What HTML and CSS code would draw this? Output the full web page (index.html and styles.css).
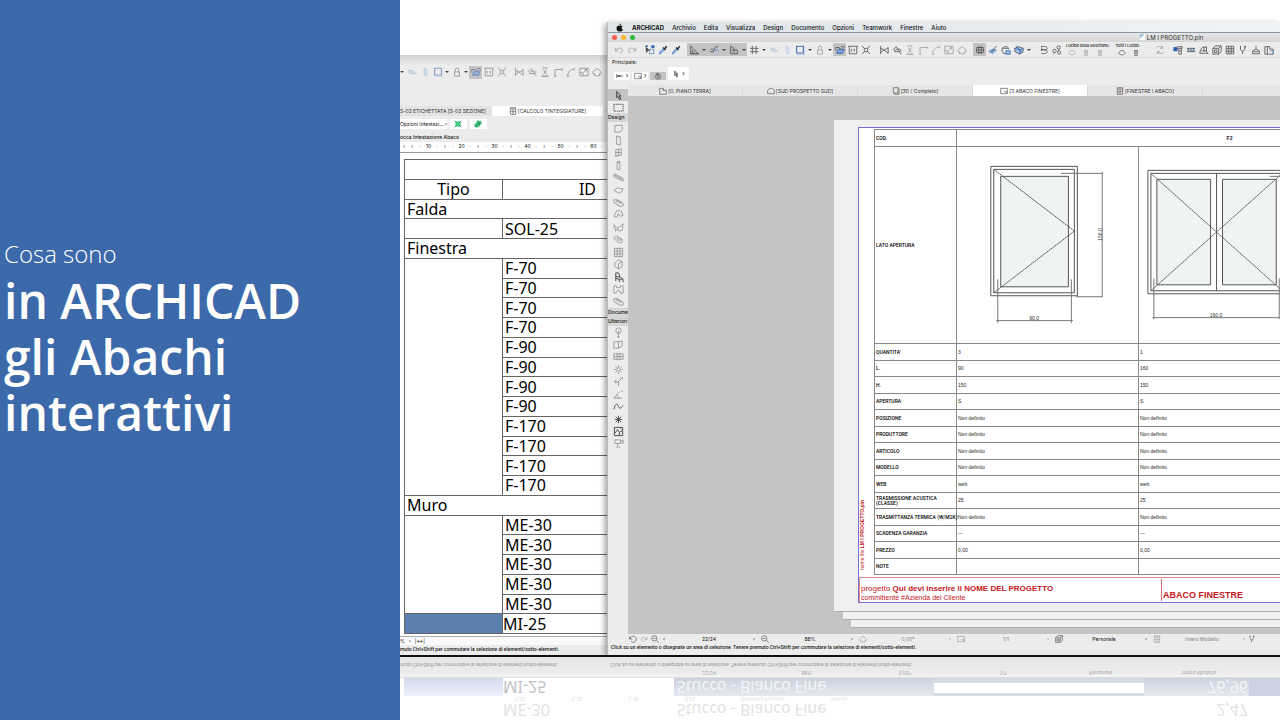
FILE: index.html
```html
<!DOCTYPE html>
<html lang="it">
<head>
    <meta charset="UTF-8">
    <meta name="viewport" content="width=device-width, initial-scale=1.0">
    <title>Cosa sono in ARCHICAD gli Abachi interattivi</title>
    <link rel="stylesheet" href="styles.css">
</head>
<body>
    <svg class="sprite" aria-hidden="true">
        <symbol id="i-undo" viewBox="0 0 12 12"><path d="M1.5 3.5v3.5h3.5M2 6.5C4 2.500 10.500 3 10 7c-.2 1.800-1.500 2.500-3 2.500"/></symbol>
        <symbol id="i-redo" viewBox="0 0 12 12"><path d="M10.500 3.500v3.500H7M10 6.500C8 2.500 1.500 3 2 7c.2 1.800 1.500 2.500 3 2.500"/></symbol>
        <symbol id="i-pick" viewBox="0 0 12 12"><path d="M5.500 5h5v5.500h-5z" stroke="#2e5fa8" stroke-dasharray="2 1"/><path d="M1 3l4 3-2 .5L2 9z" fill="#223"/><path d="M1 1h2v1H1zM8 1h3v2H8z" fill="#2e5fa8" stroke="#2e5fa8"/></symbol>
        <symbol id="i-pipette" viewBox="0 0 12 12"><path d="M1.500 11l1-3 4-4 1.500 1.500-4 4z" fill="#8db5e8" stroke="#5a83c8"/><path d="M6 3l3 3M8 4.500L10.500 1.500" stroke="#234" stroke-width="1.800"/></symbol>
        <symbol id="i-setsq" viewBox="0 0 12 12"><path d="M2 1v9.500h9zM4 6v2.500h2.500M1 10.500h11"/></symbol>
        <symbol id="i-snap" viewBox="0 0 12 12"><path d="M1 8h5M2 5h3M11 2H8L5 8"/><path d="M5 6h6" stroke="#5a83c8"/></symbol>
        <symbol id="i-plane" viewBox="0 0 12 12"><path d="M2 1v9.500h9M2 1l4 3v6M6 6h4v4M3 6h3"/></symbol>
        <symbol id="i-grid" viewBox="0 0 12 12"><path d="M4 1v10M8.500 1v10M1 4h10.500M1 8h10.500"/></symbol>
        <symbol id="i-slab" viewBox="0 0 12 12"><path d="M1 4h5l5 4H6zM4 4l5 4M2 6l4 3" stroke="#8fa9cd"/></symbol>
        <symbol id="i-blade" viewBox="0 0 12 12"><path d="M5 1v8l3 2V3z" fill="#c9dcf4" stroke="#8fb0dc"/></symbol>
        <symbol id="i-frame" viewBox="0 0 12 12"><path d="M2 1.500h8v8H2z" stroke="#456cab" stroke-width="1.300"/><path d="M2 11.500h10V3" stroke="#a6bfe4"/></symbol>
        <symbol id="i-lock" viewBox="0 0 12 12"><path d="M3 6h6v5H3zM4 6V2.500C4 .7 8 .7 8 2.500V6"/></symbol>
        <symbol id="i-trace" viewBox="0 0 12 12"><path d="M2 10l2-5h7l-2 5z" fill="#7ea5dc" stroke="#2e5fa8"/><path d="M1 3h4l2 3M7 2h4v2M1 3v4"/></symbol>
        <symbol id="i-board" viewBox="0 0 12 12"><path d="M0 1.500h12M1.500 2v8.500h9V2M4 5v3M4 5h1M7.500 5v3M7 5h1"/></symbol>
        <symbol id="i-shrink" viewBox="0 0 12 12"><path d="M4 4h4v4H4zM1 1l3 3M11 1L8 4M1 11l3-3M11 11L8 8"/></symbol>
        <symbol id="i-split" viewBox="0 0 12 12"><path d="M2 1v10M2 9l4-3 5 4V3L7 6 2 4"/></symbol>
        <symbol id="i-spline" viewBox="0 0 12 12"><path d="M1 6l4-4 6 9M3 8h6c3-1 1-4-1-3S4 4 3 8z"/></symbol>
        <symbol id="i-elev" viewBox="0 0 12 12"><path d="M3 1h6M3 11h6M4 3l2 3 2-3M4 9l2-3 2 3M1.500 11h9"/></symbol>
        <symbol id="i-corner" viewBox="0 0 12 12"><path d="M2.500 11V3H11M1 11h3M11 1.500v3"/></symbol>
        <symbol id="i-arc" viewBox="0 0 12 12"><path d="M2 11C2 6 5 3 10 2.500M1 11h3M10 1v3"/></symbol>
        <symbol id="i-resize" viewBox="0 0 12 12"><path d="M1 1.500h10v9H1zM1 7h4v3.500M6 6l3-3M7 3h2v2"/></symbol>
        <symbol id="i-home" viewBox="0 0 12 12"><path d="M1 7C1 4.500 4 4 6 2c2 2 5 2.500 5 5 0 2-1.500 1-2 1v2.500H3V8C2.500 8 1 9 1 7z"/></symbol>
        <symbol id="i-group" viewBox="0 0 12 12"><path d="M2 3h8v6H2zM4.500 1v10M7.500 1v10M1 6h10"/></symbol>
        <symbol id="i-edit" viewBox="0 0 12 12"><path d="M1 8l4-3 5 1-4 4z" fill="#8db5e8" stroke="#5a83c8"/><path d="M4 9l6-8"/></symbol>
        <symbol id="i-globe" viewBox="0 0 12 12"><path d="M9.500 5A4.300 4.300 0 1 0 6 10.500M2 4h7"/><path d="M6 7h5v4H6z" fill="#a9c6ee" stroke="#2e5fa8"/></symbol>
        <symbol id="i-cube" viewBox="0 0 12 12"><path d="M1 4l4-2 6 2v4l-4 3-6-3z" fill="#a9c6ee"/><path d="M1 4l6 2 4-2M7 6v5M3 1l6 8" stroke="#2e5fa8"/></symbol>
        <symbol id="i-layers" viewBox="0 0 12 12"><path d="M3 2c3-1 7 0 7 2S7 6 3 5M3 1v2M2 6c5 0 8 0 8 2s-4 3-7 2M3 4v3"/></symbol>
        <symbol id="i-linked" viewBox="0 0 12 12"><circle cx="8" cy="3" r="2"/><circle cx="3" cy="7" r="2"/><circle cx="8.500" cy="9" r="2"/><path d="M2 11l1-2M8 5v2"/></symbol>
        <symbol id="i-eye" viewBox="0 0 12 12"><path d="M1 6c2-5 8-5 10 0-2 4-8 4-10 0z"/></symbol>
        <symbol id="i-pad" viewBox="0 0 12 12"><path d="M4 4h4v6H4zM4 4V2h4v2M4 7h4"/></symbol>
        <symbol id="i-swap" viewBox="0 0 12 12"><path d="M2 4c0-3 6-3 7 0M9 1v3H6M10 8c0 3-6 3-7 0M3 11V8h3"/></symbol>
        <symbol id="i-export" viewBox="0 0 12 12"><path d="M1 3h4v4H1z" fill="#2e5fa8" stroke="#2e5fa8"/><path d="M5 2h6v2H5M7 4v7h3V4M7 7h3"/></symbol>
        <symbol id="i-beam" viewBox="0 0 12 12"><path d="M1 4h10M1 8h10M3 4v4M6 4v4M9 4v4"/><path d="M1 6h10" stroke="#5b8fd8"/></symbol>
        <symbol id="i-solid" viewBox="0 0 12 12"><path d="M1 10c0-4 2-7 5-8v6M6 3l3-1v6l2 2H1M3 7h6"/></symbol>
        <symbol id="i-box" viewBox="0 0 12 12"><path d="M1 4h7v7H1zM1 4l3-3h7v7l-3 3M8 4l3-3M3 6h3v3H3z"/></symbol>
        <symbol id="i-sheet" viewBox="0 0 12 12"><path d="M1.500 1.500h9v9h-9zM1.500 4.500h9M1.500 7.500h9M4.500 1.500v9M7.500 1.500v9"/></symbol>
        <symbol id="i-fork" viewBox="0 0 12 12"><path d="M3 1v4c0 3 5 3 5 0V1M5.500 7.500V11M9 1v2"/></symbol>
        <symbol id="i-stamp" viewBox="0 0 12 12"><path d="M6 1v4M2 10.500V7l4-2 4 2v3.500zM3 8h6"/></symbol>
        <symbol id="i-plan" viewBox="0 0 12 12"><path d="M1 2h6v3h4v6H1zM4 2v9"/><path d="M7 7h4v4" stroke="#5b8fd8"/></symbol>
        <symbol id="i-rotate" viewBox="0 0 12 12"><circle cx="6" cy="7" r="4"/><circle cx="6" cy="7" r="1.500"/><path d="M3 1l3 3M6 1v3H3"/></symbol>
        <symbol id="i-line" viewBox="0 0 12 12"><path d="M1 3v6M1 6h10" /><path d="M2 6h5" stroke-width="2.500"/></symbol>
        <symbol id="i-arrow" viewBox="0 0 12 12"><path d="M4 1.500v7l1.500-1.500L7 10.500l1.500-.6L7 6.500h2z" fill="#aaa" stroke="#444"/></symbol>
        <symbol id="i-marquee" viewBox="0 0 12 12"><path d="M1 2.500h10v7.500H1z" stroke="#444" stroke-dasharray="1.500 .8"/></symbol>
        <symbol id="i-wall" viewBox="0 0 12 12"><path d="M2 3l8-1v6l-3 2H2z"/></symbol>
        <symbol id="i-door" viewBox="0 0 12 12"><path d="M4 1l4 1v9l-4-1z"/></symbol>
        <symbol id="i-window" viewBox="0 0 12 12"><path d="M3 3l6-1v7l-6 1zM6 2.500v7M3 6h6M2 10h2"/></symbol>
        <symbol id="i-column" viewBox="0 0 12 12"><path d="M4.500 1.500h3v9h-3zM4.500 3h3"/></symbol>
        <symbol id="i-beam3" viewBox="0 0 12 12"><path d="M1 3l1-1 9 5v3L1 5zM1 3l9 5"/></symbol>
        <symbol id="i-slab3" viewBox="0 0 12 12"><path d="M1 6l4-3 3 1h3l-1 3-3 2-4-2z"/></symbol>
        <symbol id="i-stair" viewBox="0 0 12 12"><path d="M1 3h4l6 4v3H7L1 6zM3 3l6 4M3 6l4-2M6 8l3-3"/></symbol>
        <symbol id="i-roof" viewBox="0 0 12 12"><path d="M1 8l3-6h5l2 5-3 1-2-3-2 4z"/></symbol>
        <symbol id="i-shell" viewBox="0 0 12 12"><path d="M1 3l4 4 6-5-1 7-3 1-2-3-2 3z"/></symbol>
        <symbol id="i-skylight" viewBox="0 0 12 12"><path d="M1 4l3-2 6 4v3l-3 1-5-4zM4 5l3-1 2 2-3 1z"/></symbol>
        <symbol id="i-morph" viewBox="0 0 12 12"><path d="M2 8C1 4 4 2 6 1l4 2v5l-4 3zM6 5v6M6 5l4-2"/></symbol>
        <symbol id="i-chair" viewBox="0 0 12 12"><path d="M3 1v9M3 1h3l1 2v3M3 5l5 .5L11 8v3M3 7l4 1v3M7 8l4-.5"/></symbol>
        <symbol id="i-mesh" viewBox="0 0 12 12"><path d="M1 2h3v2h4V2h3v8H8V8L5 7l-2 3H1z"/></symbol>
        <symbol id="i-lamp" viewBox="0 0 12 12"><circle cx="6" cy="4" r="3"/><path d="M6 4v7M4.500 11h3"/></symbol>
        <symbol id="i-zone" viewBox="0 0 12 12"><path d="M1 3h5v7H1zM6 3l4-1v6L6 10"/></symbol>
        <symbol id="i-net" viewBox="0 0 12 12"><path d="M1 3h10v6H1zM4.500 2v8M7.500 2v8M1 6h10"/></symbol>
        <symbol id="i-sun" viewBox="0 0 12 12"><circle cx="6" cy="6" r="2"/><path d="M6 1v2M6 9v2M1 6h2M9 6h2M2.500 2.500L4 4M8 8l1.500 1.500M9.500 2.500L8 4M2.500 9.500L4 8"/></symbol>
        <symbol id="i-dim" viewBox="0 0 12 12"><path d="M1 6l4 1 4-4M3 4v4M6 6v5M8 2h1M10 1v3"/></symbol>
        <symbol id="i-angle" viewBox="0 0 12 12"><path d="M1 10h9M1 10l6-7M6 10c0-2-1-3-2-3.500M9 2l2 1"/></symbol>
        <symbol id="i-curve" viewBox="0 0 12 12"><path d="M1 9C3 1 5 3 6 6s3 2 5-1"/></symbol>
        <symbol id="i-star" viewBox="0 0 12 12"><path d="M6 2v8M2 6h8M3 3l6 6M9 3l-6 6"/></symbol>
        <symbol id="i-picture" viewBox="0 0 12 12"><path d="M1.500 1.500h9v9h-9zM2 8l3-4 2 3 3-2M7 7v3M8 3h1"/></symbol>
        <symbol id="i-camera" viewBox="0 0 12 12"><path d="M2 2h6v4H2zM8 4l3-2v4zM5 6v3M3 11l2-2 3 2"/></symbol>
        <symbol id="i-folder" viewBox="0 0 12 12"><path d="M1 2h5v3h5v6H1zM6 2l2 3"/></symbol>
        <symbol id="i-front" viewBox="0 0 12 12"><path d="M1 5l3-3h4l3 3v5H1z"/></symbol>
        <symbol id="i-page3d" viewBox="0 0 12 12"><path d="M2 1h7v8H2zM9 1l1.500 1.500V11H4L2 9"/></symbol>
        <symbol id="i-list" viewBox="0 0 12 12"><path d="M2 1h8v10H2zM2 3h8M2 7h8M6 3v8"/></symbol>
        <symbol id="i-layout" viewBox="0 0 12 12"><path d="M1 2h10v8H1zM6 7h4v3"/></symbol>
        <symbol id="i-zoom" viewBox="0 0 12 12"><circle cx="5" cy="5" r="4"/><path d="M8 8l3.500 3.500M3 5h4"/></symbol>
        <symbol id="i-back" viewBox="0 0 12 12"><path d="M1 2v4h4M1 6c2-6 10-5 10 0s-6 6-8 3"/></symbol>
        <symbol id="i-green" viewBox="0 0 12 12"><path d="M2 2h8v8H2z" fill="#48cf88" stroke="none"/><path d="M1 1l3 3M11 1L8 4M1 11l3-3M11 11L8 8" stroke="#167a43"/></symbol>
        <symbol id="i-green2" viewBox="0 0 12 12"><path d="M4 1h7v6H8v4H1V5h3z" fill="#48cf88" stroke="none"/><path d="M4 4l4 4M1 8h3v3M6 1v3M11 4H8v4" stroke="#116236"/></symbol>
        <symbol id="i-apple" viewBox="0 0 12 12"><path d="M6 4c2-1 3-.5 4 .5-2 1-1.500 3.500.5 4C9.500 11 8.500 12 6.500 11 4 12 2 10 2 7c0-3 2-4 4-3zM6 3c0-1.500 1-2.500 2-2.500C8 2 7.500 3 6 3z" fill="#111" stroke="none"/></symbol>
    </svg>

    <div class="page">
        <header class="cover">
            <p class="kicker">Cosa sono</p>
            <h1>in ARCHICAD<br>gli Abachi<br>interattivi</h1>
        </header>

        <main class="stage">
            <div class="windows">
                <section class="window window-back">
                    <div class="tools">
                        <button class="caret" aria-label="Altro"></button>
                        <button aria-label="Solaio"><svg><use href="#i-slab"/></svg></button>
                        <button aria-label="Lama"><svg><use href="#i-blade"/></svg></button>
                        <button aria-label="Cornice"><svg><use href="#i-frame"/></svg></button>
                        <button class="caret" aria-label="Altro"></button>
                        <button aria-label="Blocca"><svg><use href="#i-lock"/></svg></button>
                        <button class="caret" aria-label="Altro"></button>
                        <button class="on" aria-label="Traccia"><svg><use href="#i-trace"/></svg></button>
                        <button aria-label="Tavola"><svg><use href="#i-board"/></svg></button>
                        <button class="end" aria-label="Riduci"><svg><use href="#i-shrink"/></svg></button>
                        <button aria-label="Dividi"><svg><use href="#i-split"/></svg></button>
                        <button aria-label="Spline"><svg><use href="#i-spline"/></svg></button>
                        <button aria-label="Quota"><svg><use href="#i-elev"/></svg></button>
                        <button aria-label="Angolo"><svg><use href="#i-corner"/></svg></button>
                        <button aria-label="Raccordo"><svg><use href="#i-arc"/></svg></button>
                        <button aria-label="Ridimensiona"><svg><use href="#i-resize"/></svg></button>
                        <button aria-label="Casa"><svg><use href="#i-home"/></svg></button>
                    </div>
                    <div class="tabs">
                        <button class="tab">S-02 ETICHETTATA [S-02 SEZIONE]</button>
                        <button class="tab active"><svg><use href="#i-list"/></svg>[CALCOLO TINTEGGIATURE]</button>
                    </div>
                    <div class="options">
                        <button class="option">Opzioni Intestazi... ›</button>
                        <button class="option icon" aria-label="Adatta"><svg><use href="#i-green"/></svg></button>
                        <button class="option icon" aria-label="Unisci"><svg><use href="#i-green2"/></svg></button>
                    </div>
                    <p class="lock-note">occa Intestazione Abaco</p>
                    <div class="ruler">
                        <span>ı</span><span>ı</span><span>·</span><b>10</b><span>·</span><span>ı</span><span>·</span><b>20</b><span>·</span><span>ı</span><span>·</span><b>30</b><span>·</span><span>ı</span><span>·</span><b>40</b><span>·</span><span>ı</span><span>·</span><b>50</b><span>·</span><span>ı</span><span>·</span><b>60</b><span>·</span>
                    </div>
                    <div class="schedule">
                        <table>
                            <colgroup><col class="c-type"><col></colgroup>
                            <tr><td colspan="2"></td></tr>
                            <tr><th>Tipo</th><th class="id">ID</th></tr>
                            <tr><td colspan="2">Falda</td></tr>
                            <tr><td></td><td>SOL-25</td></tr>
                            <tr><td colspan="2">Finestra</td></tr>
                            <tr><td rowspan="12"></td><td>F-70</td></tr>
                            <tr><td>F-70</td></tr>
                            <tr><td>F-70</td></tr>
                            <tr><td>F-70</td></tr>
                            <tr><td>F-90</td></tr>
                            <tr><td>F-90</td></tr>
                            <tr><td>F-90</td></tr>
                            <tr><td>F-90</td></tr>
                            <tr><td>F-170</td></tr>
                            <tr><td>F-170</td></tr>
                            <tr><td>F-170</td></tr>
                            <tr><td>F-170</td></tr>
                            <tr><td colspan="2">Muro</td></tr>
                            <tr><td rowspan="5"></td><td>ME-30</td></tr>
                            <tr><td>ME-30</td></tr>
                            <tr><td>ME-30</td></tr>
                            <tr><td>ME-30</td></tr>
                            <tr><td>ME-30</td></tr>
                            <tr><td class="selected"></td><td class="editing">MI-25</td></tr>
                        </table>
                    </div>
                    <div class="status"><span>%</span><span>›</span><span>|↔|</span></div>
                    <p class="message">muto Ctrl+Shift per commutare la selezione di elementi/sotto-elementi.</p>
                </section>

                <section class="window window-front">
                    <nav class="menubar">
                        <svg><use href="#i-apple"/></svg>
                        <a href="#"><strong>ARCHICAD</strong></a>
                        <a href="#">Archivio</a>
                        <a href="#">Edita</a>
                        <a href="#">Visualizza</a>
                        <a href="#">Design</a>
                        <a href="#">Documento</a>
                        <a href="#">Opzioni</a>
                        <a href="#">Teamwork</a>
                        <a href="#">Finestre</a>
                        <a href="#">Aiuto</a>
                    </nav>
                    <div class="titlebar">
                        <i class="light red"></i><i class="light yellow"></i><i class="light green"></i>
                        <span class="title"><i class="file"></i>LM I PROGETTO.pin</span>
                    </div>
                    <div class="tools">
                        <button aria-label="Annulla"><svg class="faint"><use href="#i-undo"/></svg></button>
                        <button class="end" aria-label="Ripristina"><svg class="faint"><use href="#i-redo"/></svg></button>
                        <button aria-label="Trova"><svg><use href="#i-pick"/></svg></button>
                        <button aria-label="Preleva"><svg><use href="#i-pipette"/></svg></button>
                        <button class="end" aria-label="Inietta"><svg><use href="#i-pipette"/></svg></button>
                        <button class="on" aria-label="Guide"><svg><use href="#i-setsq"/></svg></button>
                        <button class="on caret" aria-label="Altro"></button>
                        <button class="on" aria-label="Snap"><svg><use href="#i-snap"/></svg></button>
                        <button class="on caret" aria-label="Altro"></button>
                        <button class="on" aria-label="Piano"><svg><use href="#i-plane"/></svg></button>
                        <button class="on caret" aria-label="Altro"></button>
                        <button aria-label="Griglia"><svg><use href="#i-grid"/></svg></button>
                        <button class="caret" aria-label="Altro"></button>
                        <button aria-label="Solaio"><svg class="faint"><use href="#i-slab"/></svg></button>
                        <button aria-label="Lama"><svg class="faint"><use href="#i-blade"/></svg></button>
                        <button aria-label="Cornice"><svg><use href="#i-frame"/></svg></button>
                        <button class="caret" aria-label="Altro"></button>
                        <button aria-label="Blocca"><svg class="faint"><use href="#i-lock"/></svg></button>
                        <button class="caret" aria-label="Altro"></button>
                        <button class="on" aria-label="Traccia"><svg><use href="#i-trace"/></svg></button>
                        <button aria-label="Tavola"><svg><use href="#i-board"/></svg></button>
                        <button class="end" aria-label="Riduci"><svg><use href="#i-shrink"/></svg></button>
                        <button aria-label="Dividi"><svg><use href="#i-split"/></svg></button>
                        <button aria-label="Spline"><svg><use href="#i-spline"/></svg></button>
                        <button aria-label="Quota"><svg class="faint"><use href="#i-elev"/></svg></button>
                        <button aria-label="Angolo"><svg class="faint"><use href="#i-corner"/></svg></button>
                        <button aria-label="Raccordo"><svg class="faint"><use href="#i-arc"/></svg></button>
                        <button aria-label="Ridimensiona"><svg class="faint"><use href="#i-resize"/></svg></button>
                        <button class="end" aria-label="Casa"><svg class="faint"><use href="#i-home"/></svg></button>
                        <button class="on" aria-label="Raggruppa"><svg><use href="#i-group"/></svg></button>
                        <button aria-label="Modifica"><svg><use href="#i-edit"/></svg></button>
                        <button aria-label="Rete"><svg><use href="#i-globe"/></svg></button>
                        <button aria-label="Cubo"><svg><use href="#i-cube"/></svg></button>
                        <button class="caret end" aria-label="Altro"></button>
                        <button aria-label="Lucidi"><svg><use href="#i-layers"/></svg></button>
                        <button aria-label="Collega"><svg><use href="#i-linked"/></svg></button>
                        <div class="layer-set">
                            <span>Lucido della selezione:</span>
                            <div class="layer-icons faint"><svg><use href="#i-eye"/></svg><svg><use href="#i-pad"/></svg><svg><use href="#i-pad"/></svg></div>
                        </div>
                        <div class="layer-set">
                            <span>Tutti i Lucidi:</span>
                            <div class="layer-icons"><svg><use href="#i-eye"/></svg><svg><use href="#i-pad"/></svg></div>
                        </div>
                        <button class="far end" aria-label="Scambia"><svg class="faint"><use href="#i-swap"/></svg></button>
                        <button aria-label="Esporta"><svg><use href="#i-export"/></svg></button>
                        <button aria-label="Travi"><svg><use href="#i-beam"/></svg></button>
                        <button aria-label="Solidi"><svg><use href="#i-solid"/></svg></button>
                        <button aria-label="Volume"><svg><use href="#i-box"/></svg></button>
                        <button aria-label="Abaco"><svg><use href="#i-sheet"/></svg></button>
                        <button aria-label="Forcella"><svg><use href="#i-fork"/></svg></button>
                        <button aria-label="Timbro"><svg><use href="#i-stamp"/></svg></button>
                        <button aria-label="Pianta"><svg><use href="#i-plan"/></svg></button>
                    </div>
                    <div class="infobox">
                        <span>Principale:</span>
                        <div class="info-buttons">
                            <button aria-label="Linea"><svg><use href="#i-line"/></svg>›</button>
                            <button aria-label="Area"><svg><use href="#i-layout"/></svg>›</button>
                            <button class="on" aria-label="Ruota"><svg><use href="#i-rotate"/></svg></button>
                            <button class="tall" aria-label="Freccia"><svg><use href="#i-arrow"/></svg>›</button>
                        </div>
                    </div>

                    <div class="workspace">
                        <div class="toolbox">
                            <button class="on" aria-label="Freccia"><svg><use href="#i-arrow"/></svg></button>
                            <button aria-label="Area di selezione"><svg><use href="#i-marquee"/></svg></button>
                            <h2>Design</h2>
                            <div class="tool-group design">
                                <button aria-label="Muro"><svg><use href="#i-wall"/></svg></button>
                                <button aria-label="Porta"><svg><use href="#i-door"/></svg></button>
                                <button aria-label="Finestra"><svg><use href="#i-window"/></svg></button>
                                <button aria-label="Pilastro"><svg><use href="#i-column"/></svg></button>
                                <button aria-label="Trave"><svg><use href="#i-beam3"/></svg></button>
                                <button aria-label="Solaio"><svg><use href="#i-slab3"/></svg></button>
                                <button aria-label="Scala"><svg><use href="#i-stair"/></svg></button>
                                <button aria-label="Falda"><svg><use href="#i-roof"/></svg></button>
                                <button aria-label="Guscio"><svg><use href="#i-shell"/></svg></button>
                                <button aria-label="Lucernario"><svg><use href="#i-skylight"/></svg></button>
                                <button aria-label="Facciata"><svg><use href="#i-sheet"/></svg></button>
                                <button aria-label="Forma"><svg><use href="#i-morph"/></svg></button>
                                <button aria-label="Oggetto"><svg class="dark"><use href="#i-chair"/></svg></button>
                                <button aria-label="Zona"><svg><use href="#i-mesh"/></svg></button>
                                <button aria-label="Mesh"><svg><use href="#i-stair"/></svg></button>
                            </div>
                            <h2>Docume</h2>
                            <h2>Ulteriori</h2>
                            <div class="tool-group more">
                                <button aria-label="Lampada"><svg><use href="#i-lamp"/></svg></button>
                                <button aria-label="Angolo muro"><svg><use href="#i-zone"/></svg></button>
                                <button aria-label="Griglia"><svg><use href="#i-net"/></svg></button>
                                <button aria-label="Luce"><svg><use href="#i-sun"/></svg></button>
                                <button aria-label="Radiale"><svg><use href="#i-dim"/></svg></button>
                                <button aria-label="Angolare"><svg><use href="#i-angle"/></svg></button>
                                <button aria-label="Spline"><svg class="dark"><use href="#i-curve"/></svg></button>
                                <button aria-label="Punto"><svg class="dark"><use href="#i-star"/></svg></button>
                                <button aria-label="Figura"><svg class="dark"><use href="#i-picture"/></svg></button>
                                <button aria-label="Camera"><svg><use href="#i-camera"/></svg></button>
                            </div>
                        </div>

                        <div class="views">
                            <div class="tabs">
                                <button class="tab"><svg><use href="#i-folder"/></svg>[0. PIANO TERRA]</button>
                                <button class="tab"><svg><use href="#i-front"/></svg>[SUD PROSPETTO SUD]</button>
                                <button class="tab"><svg><use href="#i-page3d"/></svg>[3D / Completo]</button>
                                <button class="tab active"><svg><use href="#i-layout"/></svg>[3 ABACO FINESTRE]</button>
                                <button class="tab"><svg><use href="#i-list"/></svg>[FINESTRE I ABACO]</button>
                            </div>
                            <div class="canvas">
                                <div class="sheet">
                                    <div class="drawing">
                                        <div class="drawing-top">
                                            <p class="filename">nome file <b>LM I PROGETTO.pin</b></p>
                                            <table class="abaco">
                                                <colgroup><col class="c-name"><col class="c-val"><col></colgroup>
                                                <tr class="code"><th>COD.</th><td></td><td><b>F2</b></td></tr>
                                                <tr class="views-row">
                                                    <th>LATO APERTURA</th>
                                                    <td>
                                                        <svg class="elevation" viewBox="957 147 181 197">
                                                            <path class="glass" d="M1000.500 176.500h68v111h-68z"/>
                                                            <path d="M990.500 166.500h87v130h-87zM993.500 169.500h81v124h-81z"/>
                                                            <path d="M993.500 169.500l81 62-81 62" stroke-dasharray="2 .5"/>
                                                            <path class="thin" d="M1061 173.500h42M1076 297.500h27M1102.500 172v126M997.500 280v44M1071.500 280v44M996 321.500h77"/>
                                                            <text x="1034" y="321">90,0</text>
                                                            <text transform="translate(1102 235) rotate(-90)">150,0</text>
                                                        </svg>
                                                    </td>
                                                    <td>
                                                        <svg class="elevation" viewBox="1139 147 181 197">
                                                            <path class="glass" d="M1156.500 179.500h54v106h-54zM1222.500 179.500h54v106h-54z"/>
                                                            <path d="M1147.500 170.500h138v124h-138zM1150.500 173.500h132v118h-132zM1216.500 173.500v118"/>
                                                            <path d="M1150.500 173.500l66 59-66 59M1282.500 173.500l-66 59 66 59" stroke-dasharray="2 .5"/>
                                                            <path class="thin" d="M1270 176.500h40M1153.500 279v41M1279.500 279v41M1152 318.500h128"/>
                                                            <text x="1216" y="318">160,0</text>
                                                        </svg>
                                                    </td>
                                                </tr>
                                                <tr><th>QUANTITA'</th><td>3</td><td>1</td></tr>
                                                <tr><th>L.</th><td>90</td><td>160</td></tr>
                                                <tr><th>H.</th><td>150</td><td>150</td></tr>
                                                <tr><th>APERTURA</th><td>S</td><td>S</td></tr>
                                                <tr><th>POSIZIONE</th><td>Non definito</td><td>Non definito</td></tr>
                                                <tr><th>PRODUTTORE</th><td>Non definito</td><td>Non definito</td></tr>
                                                <tr><th>ARTICOLO</th><td>Non definito</td><td>Non definito</td></tr>
                                                <tr><th>MODELLO</th><td>Non definito</td><td>Non definito</td></tr>
                                                <tr><th>WEB</th><td>web</td><td>web</td></tr>
                                                <tr><th>TRASMISSIONE ACUSTICA<br>(CLASSE)</th><td>25</td><td>25</td></tr>
                                                <tr><th>TRASMITTANZA TERMICA (W/M2K)</th><td>Non definito</td><td>Non definito</td></tr>
                                                <tr><th>SCADENZA GARANZIA</th><td>---</td><td>---</td></tr>
                                                <tr><th>PREZZO</th><td>0,00</td><td>0,00</td></tr>
                                                <tr><th>NOTE</th><td></td><td></td></tr>
                                            </table>
                                        </div>
                                        <div class="titleblock">
                                            <div class="project">
                                                <p>progetto <b>Qui devi inserire il NOME DEL PROGETTO</b></p>
                                                <p class="client">committente #Azienda del Cliente</p>
                                            </div>
                                            <div class="drawing-name">ABACO FINESTRE</div>
                                        </div>
                                    </div>
                                </div>
                            </div>
                        </div>
                    </div>
                    <div class="status">
                        <div class="zooms"><svg><use href="#i-back"/></svg><svg class="faint"><use href="#i-redo"/></svg><svg><use href="#i-zoom"/></svg></div>
                        <div class="field"><span>‹</span><span>22/24</span><span>›</span></div>
                        <div class="field"><svg><use href="#i-zoom"/></svg><span>88%</span><span>›</span></div>
                        <div class="field faint"><svg><use href="#i-home"/></svg><span>0,00°</span><span>›</span></div>
                        <div class="field faint"><svg><use href="#i-layout"/></svg><span>1/1</span><span>›</span></div>
                        <div class="field"><svg><use href="#i-box"/></svg><span>Personale</span><span>›</span></div>
                        <div class="field faint"><svg><use href="#i-list"/></svg><span>Intero Modello</span><span>›</span></div>
                        <svg><use href="#i-fork"/></svg>
                    </div>
                    <p class="message">Click su un elemento o disegnate un area di selezione. Tenere premuto Ctrl+Shift per commutare la selezione di elementi/sotto-elementi.</p>
                </section>
            </div>

            <div class="reflection" aria-hidden="true">
                <div class="mirror">
                    <div class="m-row">
                        <span class="m-type"></span><span class="m-id">ME-30</span><span class="m-name">Stucco - Bianco Fine</span><span class="m-box"></span><span class="m-num">2,47</span>
                    </div>
                    <div class="m-small"><span>5,05</span><span>0,29</span><span>2,46</span><span>5,65</span><span>Elemento Portante</span><span>Interno</span></div>
                    <div class="m-row m-blue">
                        <span class="m-type"></span><span class="m-id">MI-25</span><span class="m-name">Stucco - Bianco Fine</span><span class="m-box"></span><span class="m-num">76,96</span>
                    </div>
                    <div class="m-status"><span>22/24</span><span>88%</span><span>0,00°</span><span>1/1</span><span>Personale</span><span>Intero Modello</span></div>
                    <div class="m-message">
                        <span>muto Ctrl+Shift per commutare la selezione di elementi/sotto-elementi.</span>
                        <span>Click su un elemento o disegnate un area di selezione. Tenere premuto Ctrl+Shift per commutare la selezione di elementi/sotto-elementi.</span>
                    </div>
                </div>
            </div>
        </main>
    </div>
</body>
</html>
```
FILE: styles.css
```css
* {
    box-sizing: border-box;
}

body {
    margin: 0;
    background: #fff;
    color: #111;
    font-family: Inter, "Open Sans", sans-serif;
    font-size: 5px;
}

p, h1, h2 {
    margin: 0;
}

a {
    color: inherit;
    text-decoration: none;
}

button {
    border: none;
    padding: 0;
    margin: 0;
    background: none;
    font: inherit;
    color: inherit;
    white-space: nowrap;
}

svg {
    display: block;
    width: 10px;
    height: 10px;
    flex: none;
    fill: none;
    stroke: #555;
    stroke-width: 1;
}

.sprite {
    display: none;
}

.faint {
    opacity: 0.5;
}

.on {
    background: #c3c3c6;
}

.page {
    display: flex;
    min-height: 100vh;
}

/* Cover */

.cover {
    flex: 0 0 400px;
    display: flex;
    flex-direction: column;
    justify-content: center;
    padding: 0 4px 42px;
    background: #3c69a9;
    color: #fff;
    font-family: "Open Sans", sans-serif;
}

.kicker {
    margin-bottom: 2px;
    font-size: 24px;
    font-weight: 300;
    line-height: 34px;
}

h1 {
    font-size: 48px;
    font-weight: 600;
    line-height: 56px;
}

/* Windows */

.stage {
    flex: 1;
    min-width: 0;
    display: flex;
    flex-direction: column;
}

.windows {
    flex: 1;
    display: flex;
}

.window {
    display: flex;
    flex-direction: column;
    background: #ececec;
    white-space: nowrap;
}

.window-back {
    flex: 0 0 207px;
    margin-top: 55px;
    overflow: hidden;
    background: linear-gradient(#cfcfcf, #ececec 10px);
}

.window-front {
    flex: 1;
    min-width: 0;
    margin-top: 22px;
    border-left: 1px solid #bbb;
    box-shadow: -2px 2px 6px rgba(0, 0, 0, 0.4);
}

.tools {
    display: flex;
    align-items: center;
    height: 16px;
    border-bottom: 1px solid #dcdcdc;
}

.tools button {
    flex: 0 0 13px;
    height: 13px;
    display: flex;
    align-items: center;
    justify-content: center;
}

.tools .caret {
    flex-basis: 7px;
}

.caret::after {
    content: "";
    border: 2px solid transparent;
    border-top-color: #444;
    border-bottom: none;
}

.tools .end {
    margin-right: 5px;
}

.window-front .tools {
    padding-left: 4px;
    overflow: hidden;
}

.layer-set {
    flex: none;
    margin: 0 3px;
    font-size: 4px;
    font-weight: 500;
    line-height: 6px;
}

.layer-icons {
    display: flex;
    gap: 6px;
    padding-left: 2px;
}

.layer-icons svg {
    width: 8px;
    height: 8px;
}

.tools .far {
    margin-left: 11px;
}

.tabs {
    display: flex;
    height: 11px;
    background: #e6e6e6;
}

.tab {
    display: flex;
    align-items: center;
    justify-content: center;
    gap: 1px;
    border-right: 1px solid #dadada;
    color: #333;
}

.tab.active {
    background: #fff;
}

.tab svg {
    width: 8px;
    height: 8px;
}

.message {
    height: 12px;
    padding-left: 3px;
    font-family: Roboto, sans-serif;
    font-weight: 500;
    line-height: 9px;
    color: #222;
}

/* Schedule window */

.window-back .tools {
    height: 26px;
    margin: 4px 0 21px -1px;
    border: none;
}

.window-back .tools .caret {
    flex-basis: 6px;
}

.window-back .tools .end {
    margin-right: 4px;
}

.window-back .tools svg {
    opacity: 0.6;
}

.window-back .tabs {
    height: 10px;
    background: none;
}

.window-back .tab {
    flex: 0 0 92px;
    border: none;
    justify-content: flex-start;
    background: #e3e3e3;
}

.window-back .tab.active {
    flex-basis: 111px;
    justify-content: center;
    background: #fff;
}

.options {
    display: flex;
    gap: 3px;
    padding: 3px 0;
}

.option {
    height: 10px;
    background: #fff;
}

.option.icon {
    width: 17px;
    display: flex;
    align-items: center;
    justify-content: center;
}

.option.icon svg {
    width: 8px;
    height: 8px;
}

.lock-note {
    font-weight: 500;
    line-height: 10px;
}

.ruler {
    display: flex;
    height: 11px;
    border-bottom: 1px solid #999;
    background: #fff;
    line-height: 9px;
    text-align: center;
}

.ruler span {
    flex: 0 0 8px;
}

.ruler b {
    flex: 0 0 9px;
    font-weight: 400;
}

.schedule {
    flex: 1;
    padding: 6px 0 2px 4px;
    background: #fff;
}

.schedule table {
    width: 100%;
    height: 100%;
    table-layout: fixed;
    border-collapse: collapse;
    font-family: "Noto Sans", sans-serif;
    font-size: 16px;
    line-height: 16px;
    color: #000;
}

.schedule .c-type {
    width: 98px;
}

.schedule tr {
    height: 19px;
}

.schedule td,
.schedule th {
    padding: 0 2px;
    border: 1px solid #666;
    border-right: none;
    font-weight: 400;
    text-align: left;
}

.schedule th {
    text-align: center;
}

.schedule .id {
    padding-right: 11px;
    text-align: right;
}

.schedule .selected {
    background: #5b80b0;
}

.schedule .editing {
    padding: 0;
}

.window-back .status {
    gap: 4px;
    border-top: 1px solid #aaa;
    background: #fafafa;
}

.window-back .message {
    height: 10px;
    padding: 0;
}

/* Project window */

.menubar {
    display: flex;
    align-items: center;
    gap: 8px;
    height: 11px;
    padding-left: 7px;
    border-bottom: 1px solid #8c97a6;
    background: linear-gradient(90deg, #dde5e6, #e4e9ee 40%, #f1f3f6);
    font-size: 6px;
    font-weight: 500;
}

.menubar svg {
    width: 9px;
    height: 9px;
}

.menubar strong {
    font-weight: 700;
}

.titlebar {
    display: flex;
    align-items: center;
    gap: 4px;
    height: 9px;
    padding-left: 4px;
    background: linear-gradient(#e6e6e6, #d6d6d6);
}

.light {
    width: 5px;
    height: 5px;
    border-radius: 50%;
}

.red {
    background: #f4594f;
}

.yellow {
    background: #f5b62e;
}

.green {
    background: #2cb938;
}

.title {
    flex: 1;
    display: flex;
    justify-content: center;
    gap: 2px;
    padding-left: 424px;
    font-size: 6px;
    line-height: 8px;
    color: #333;
}

.file {
    width: 5px;
    height: 6px;
    background: linear-gradient(135deg, #9cbfe6 40%, #fff 40%);
}

.infobox {
    height: 27px;
    padding: 1px 4px;
    line-height: 6px;
}

.info-buttons {
    display: flex;
    align-items: flex-end;
    gap: 2px;
    margin-top: 2px;
    padding-left: 2px;
}

.info-buttons button {
    display: flex;
    align-items: center;
    justify-content: center;
    gap: 2px;
    width: 16px;
    height: 8px;
    background: #fff;
    font-size: 7px;
}

.info-buttons svg {
    width: 8px;
    height: 8px;
}

.info-buttons .on {
    background: #c3c3c6;
}

.info-buttons .tall {
    width: 21px;
    height: 13px;
}

.workspace {
    flex: 1;
    display: flex;
    min-height: 0;
}

.toolbox {
    flex: 0 0 20px;
    display: flex;
    flex-direction: column;
    padding-top: 4px;
}

.toolbox button {
    height: 12px;
    display: flex;
    align-items: center;
    justify-content: center;
}

.toolbox svg {
    width: 11px;
    height: 11px;
    stroke: #999;
}

.toolbox .dark {
    stroke: #444;
}

.toolbox h2 {
    height: 9px;
    overflow: hidden;
    background: #d6d6d6;
    font-size: 5px;
    font-weight: 500;
    line-height: 9px;
}

.tool-group {
    display: flex;
    flex-direction: column;
    justify-content: space-between;
}

.design {
    height: 186px;
}

.more {
    height: 124px;
}

.views {
    flex: 1;
    min-width: 0;
    display: flex;
    flex-direction: column;
}

.views .tab {
    flex: 0 1 115px;
}

.canvas {
    flex: 1;
    padding: 24px 0 23px 206px;
    overflow: hidden;
    background: #c4c4c4;
}

/* The offset shadows are the sheets lying below this one */
.sheet {
    display: flex;
    height: 100%;
    margin-right: -42px;
    padding: 7px 0 8px 24px;
    background: #efeff0;
    box-shadow: 0 1px #b0b0b0, 9px 8px #f0f0f0, 9px 9px #b0b0b0, 17px 16px #f0f0f0, 17px 17px #b0b0b0;
}

.drawing {
    flex: 1;
    display: flex;
    flex-direction: column;
    border: 1px solid #7b6fd6;
    background: #fff;
    font-family: "Liberation Sans", sans-serif;
}

.drawing-top {
    flex: 1;
    display: grid;
    grid-template-columns: 15px 1fr;
    align-items: start;
    padding: 1px 0 2px;
}

.filename {
    align-self: end;
    padding-left: 8px;
    padding-top: 5px;
    line-height: 7px;
    color: #c4161c;
    writing-mode: vertical-rl;
    transform: rotate(180deg);
}

.abaco {
    width: 100%;
    table-layout: fixed;
    border-collapse: collapse;
    color: #222;
}

.c-name {
    width: 82px;
}

.c-val {
    width: 182px;
}

.abaco tr {
    height: 16px;
}

.abaco tr:nth-child(odd) {
    height: 17px;
}

.abaco th,
.abaco td {
    padding: 0 1px;
    border: 1px solid #8a8a8a;
    line-height: 5px;
    text-align: left;
}

.abaco th {
    font-family: Roboto, sans-serif;
    font-weight: 500;
    color: #000;
}

.abaco .code td {
    border-right: none;
    border-left: none;
    text-align: center;
}

.abaco .views-row {
    height: 197px;
}

.abaco .views-row td {
    padding: 0;
}

.elevation {
    width: 181px;
    height: 196px;
    stroke: #555;
}

.elevation .glass {
    fill: #eff4f3;
}

.elevation .thin {
    stroke: #777;
}

.elevation text {
    fill: #333;
    stroke: none;
    font-size: 5px;
    text-anchor: middle;
}

.titleblock {
    display: flex;
    height: 25px;
    border-top: 1px solid #e08a8c;
    border-left: 1px solid #e08a8c;
    color: #c4161c;
}

.project {
    flex: 0 0 301px;
    padding: 6px 1px 0;
    font-size: 8px;
    line-height: 9px;
}

.client {
    font-size: 7px;
}

.drawing-name {
    margin: 1px 0;
    padding: 10px 1px 0;
    border-left: 1px solid #d8686c;
    font-size: 9px;
    font-weight: 700;
    line-height: 12px;
}

.status {
    display: flex;
    align-items: center;
    height: 9px;
}

.status svg {
    width: 8px;
    height: 8px;
}

.window-front .status {
    padding-left: 21px;
}

.zooms {
    display: flex;
    gap: 3px;
    flex: 0 0 31px;
}

.field {
    flex: 0 0 98px;
    display: flex;
    align-items: center;
    justify-content: space-between;
    padding: 0 3px;
}

/* Mirror image on the floor */

.reflection {
    height: 65px;
    overflow: hidden;
    border-top: 2px solid #111;
    background: #fff;
}

.mirror {
    display: flex;
    flex-direction: column;
    justify-content: flex-end;
    height: 63px;
    transform: scaleY(-1);
    background: linear-gradient(#fff 60%, #ececec 75%, #e6e6e6);
    white-space: nowrap;
    color: #aaa;
}

.m-row {
    display: flex;
    align-items: center;
    height: 18px;
    padding-left: 4px;
    font-family: "Noto Sans", sans-serif;
    font-size: 16px;
    line-height: 18px;
    color: #e2e2e4;
}

.m-type {
    flex: 0 0 99px;
}

.m-id {
    flex: 0 0 171px;
}

.m-name {
    flex: 0 0 260px;
    padding-left: 3px;
}

.m-box {
    flex: 0 0 210px;
    height: 11px;
    background: #fff;
}

.m-num {
    flex: 1;
    padding-right: 32px;
    text-align: right;
}

.m-blue {
    background: #fff;
    color: #c0c0c4;
}

.m-blue .m-type {
    height: 18px;
    background: linear-gradient(#eef1fb, #d3daed);
}

.m-blue .m-name,
.m-blue .m-num {
    height: 18px;
    background: linear-gradient(#e4e8f0, #ccd3de);
    color: #f4f6fa;
}

.m-blue .m-num {
    box-shadow: inset -31px 0 #cbd2e0;
}

.m-blue .m-box {
    height: 18px;
    border: solid #d5dbe4;
    border-width: 3px 0 5px;
}

.m-small {
    display: flex;
    gap: 46px;
    padding-left: 115px;
    font-size: 5px;
    line-height: 5px;
    color: #dfe2e8;
}

.m-status {
    display: flex;
    height: 9px;
    padding-left: 260px;
    border-top: 1px solid #ddd;
    line-height: 9px;
}

.m-status span {
    flex: 0 0 98px;
    text-align: center;
}

.m-message {
    display: flex;
    height: 12px;
    font-family: Roboto, sans-serif;
    line-height: 9px;
    color: #999;
}

.m-message span:first-child {
    flex: 0 0 210px;
}
```
